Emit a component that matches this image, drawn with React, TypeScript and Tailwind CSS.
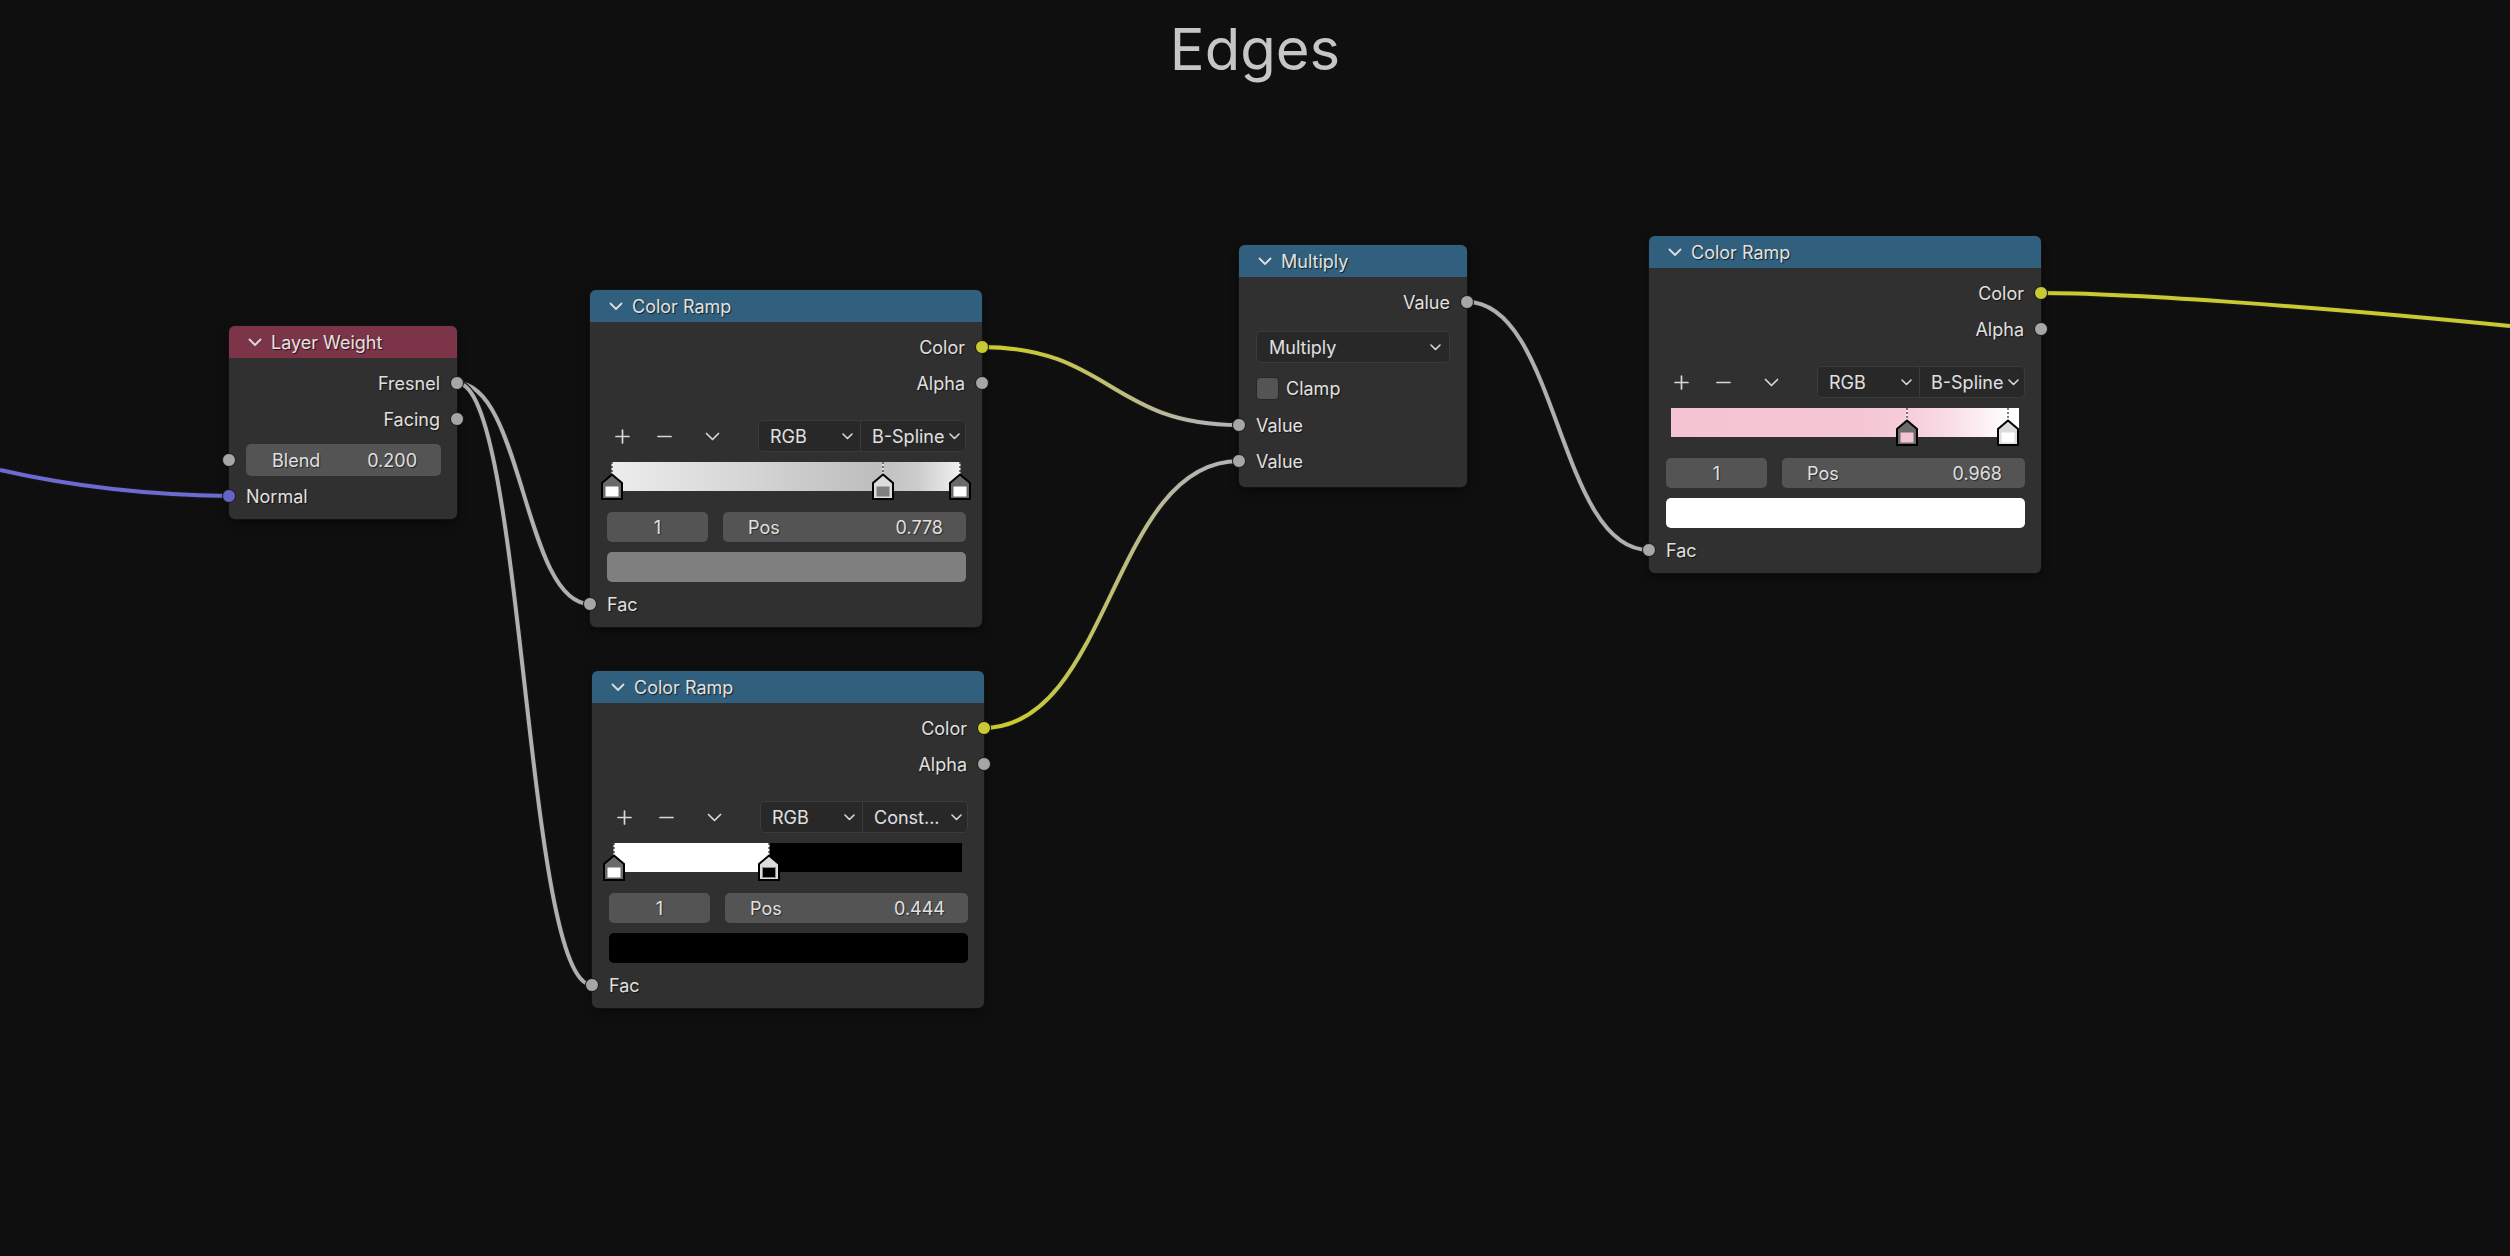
import React from 'react';

const YELLOW = '#c9c934';

function HeadChevron() {
  return (
    <svg width="14" height="9" viewBox="0 0 14 9" className="shrink-0">
      <polyline points="1.5,1.5 7,7 12.5,1.5" fill="none" stroke="#dcdcdc" strokeWidth="1.8" strokeLinecap="round" strokeLinejoin="round" />
    </svg>
  );
}

function SmallChevron() {
  return (
    <svg width="11" height="7" viewBox="0 0 11 7" className="shrink-0">
      <polyline points="1,1 5.5,5.5 10,1" fill="none" stroke="#d8d8d8" strokeWidth="1.6" strokeLinecap="round" strokeLinejoin="round" />
    </svg>
  );
}

function Socket({ side, color }: { side: 'left' | 'right'; color: string }) {
  return (
    <span
      className={`absolute top-1/2 -translate-y-1/2 w-[14px] h-[14px] rounded-full border border-[#161616] ${
        side === 'left' ? '-left-[7px]' : '-right-[7px]'
      } ${color}`}
    />
  );
}

function Node({ pos, width, head, title, children }: { pos: string; width: string; head: string; title: string; children: React.ReactNode }) {
  return (
    <div className={`absolute ${pos} ${width} rounded-[6px] bg-[#303030] shadow-[0_0_0_1px_#121212,0_3px_10px_rgba(0,0,0,0.55)]`}>
      <div className={`h-[32px] rounded-t-[6px] ${head} flex items-center pl-[19px] gap-[9px]`}>
        <HeadChevron />
        <span className="text-[18px] text-[#e2e2e2] [text-shadow:1px_1px_1px_rgba(0,0,0,0.7)]">{title}</span>
      </div>
      {children}
    </div>
  );
}

function Row({ children, className = '' }: { children: React.ReactNode; className?: string }) {
  return <div className={`relative h-[36px] flex items-center px-[17px] text-[18px] text-[#e0e0e0] [text-shadow:1px_1px_1px_rgba(0,0,0,0.6)] ${className}`}>{children}</div>;
}

function Handle({ at, fill, top, active }: { at: number; fill: string; top: string; active?: boolean }) {
  return (
    <div className="absolute top-0 -translate-x-1/2 w-[22px] h-[38px]" style={{ left: `${at * 100}%` }}>
      <svg width="22" height="38" viewBox="0 0 22 38" className="overflow-visible">
        <line x1="11" y1="0" x2="11" y2="12" stroke="#ffffff" strokeWidth="1" />
        <line x1="11" y1="0" x2="11" y2="12" stroke="#000000" strokeWidth="1" strokeDasharray="2 2" />
        <polygon points="11,12.5 21,21 21,37 1,37 1,21" fill={top} stroke="#000" strokeWidth="2" strokeLinejoin="miter" />
        <rect x="4.5" y="24.5" width="13" height="10" fill={fill} stroke={active && fill === '#000000' ? '#8a8a8a' : 'none'} strokeWidth="1" />
      </svg>
    </div>
  );
}

function Ramp({ pos, interp, bar, handles, pos2, swatch }: { pos: string; interp: string; bar: string; handles: React.ReactNode; pos2: string; swatch: string }) {
  return (
    <Node pos={pos} width="w-[392px]" head="bg-[#31607f]" title="Color Ramp">
      <div className="pt-[7px]" />
      <Row className="justify-end">
        <span>Color</span>
        <Socket side="right" color="bg-[#c9c934]" />
      </Row>
      <Row className="justify-end">
        <span>Alpha</span>
        <Socket side="right" color="bg-[#a6a6a6]" />
      </Row>
      <div className="mt-[19px] h-[32px] flex items-center pl-[17px] pr-[16px] text-[18px] text-[#e0e0e0]">
        <div className="w-[30px] flex justify-center">
          <svg width="15" height="15" viewBox="0 0 15 15">
            <path d="M7.5 1v13M1 7.5h13" stroke="#d8d8d8" strokeWidth="1.7" strokeLinecap="round" />
          </svg>
        </div>
        <div className="w-[30px] ml-[12px] flex justify-center">
          <svg width="15" height="15" viewBox="0 0 15 15">
            <path d="M1 7.5h13" stroke="#d8d8d8" strokeWidth="1.7" strokeLinecap="round" />
          </svg>
        </div>
        <div className="w-[30px] ml-[18px] flex justify-center">
          <svg width="15" height="9" viewBox="0 0 15 9">
            <polyline points="1.5,1.5 7.5,7.5 13.5,1.5" fill="none" stroke="#d8d8d8" strokeWidth="1.7" strokeLinecap="round" strokeLinejoin="round" />
          </svg>
        </div>
        <div className="ml-auto w-[208px] h-full flex rounded-[5px] bg-[#282828] border border-[#3b3b3b]">
          <div className="w-[102px] flex items-center justify-between pl-[11px] pr-[7px] border-r border-[#3b3b3b]">
            <span>RGB</span>
            <SmallChevron />
          </div>
          <div className="flex-1 flex items-center justify-between pl-[11px] pr-[5px] whitespace-nowrap">
            <span>{interp}</span>
            <SmallChevron />
          </div>
        </div>
      </div>
      <div className="mt-[10px] ml-[22px] mr-[22px] h-[29px] relative">
        <div className={`absolute inset-0 ${bar}`} />
        {handles}
      </div>
      <div className="mt-[21px] h-[30px] flex gap-[15px] pl-[17px] pr-[16px] text-[18px] text-[#e0e0e0] [text-shadow:1px_1px_1px_rgba(0,0,0,0.5)]">
        <div className="w-[101px] rounded-[5px] bg-[#545454] flex items-center justify-center">1</div>
        <div className="flex-1 rounded-[5px] bg-[#545454] flex items-center justify-between pl-[25px] pr-[23px]">
          <span>Pos</span>
          <span>{pos2}</span>
        </div>
      </div>
      <div className="mt-[10px] h-[30px] pl-[17px] pr-[16px]">
        <div className={`h-full rounded-[5px] ${swatch}`} />
      </div>
      <div className="mt-[4px]" />
      <Row>
        <Socket side="left" color="bg-[#a6a6a6]" />
        <span>Fac</span>
      </Row>
      <div className="pb-[5px]" />
    </Node>
  );
}

function Wires() {
  return (
    <svg width="2510" height="1256" className="absolute inset-0">
      <defs>
        <linearGradient id="g1" gradientUnits="userSpaceOnUse" x1="981" y1="0" x2="1239" y2="0">
          <stop offset="0.15" stopColor={YELLOW} />
          <stop offset="0.85" stopColor="#b4b4b4" />
        </linearGradient>
        <linearGradient id="g2" gradientUnits="userSpaceOnUse" x1="983" y1="0" x2="1239" y2="0">
          <stop offset="0.15" stopColor={YELLOW} />
          <stop offset="0.85" stopColor="#b4b4b4" />
        </linearGradient>
      </defs>
      {[
        { d: 'M 0 470 C 70 486, 140 495, 229 496', c: '#6b6bd2' },
        { d: 'M 457 383 C 523 383, 524 604, 590 604', c: '#b0b0b0' },
        { d: 'M 457 383 C 524 383, 525 985, 592 985', c: '#b0b0b0' },
        { d: 'M 981 347 C 1110 347, 1110 425, 1239 425', c: 'url(#g1)' },
        { d: 'M 983 728 C 1111 728, 1111 461, 1239 461', c: 'url(#g2)' },
        { d: 'M 1467 302 C 1558 302, 1558 550, 1649 550', c: '#b0b0b0' },
        { d: 'M 2041 293 C 2120 293, 2300 305, 2510 326', c: YELLOW },
      ].map((w, i) => (
        <g key={i}>
          <path d={w.d} fill="none" stroke="#151515" strokeWidth="6.5" />
          <path d={w.d} fill="none" stroke={w.c} strokeWidth="4" />
        </g>
      ))}
    </svg>
  );
}

export default function App() {
  return (
    <div className="relative w-[2510px] h-[1256px] overflow-hidden bg-[#0f0f0f] font-['Inter',sans-serif]">
      <div className="relative pt-[20px] text-center text-[58px] leading-none text-[#c6c6c6]">Edges</div>

      <Wires />

      {/* Layer Weight */}
      <Node pos="left-[229px] top-[326px]" width="w-[228px]" head="bg-[#7c3449]" title="Layer Weight">
        <div className="pt-[7px]" />
        <Row className="justify-end">
          <span>Fresnel</span>
          <Socket side="right" color="bg-[#a6a6a6]" />
        </Row>
        <Row className="justify-end">
          <span>Facing</span>
          <Socket side="right" color="bg-[#a6a6a6]" />
        </Row>
        <Row className="mt-[5px] pr-[16px]">
          <Socket side="left" color="bg-[#a6a6a6]" />
          <div className="w-full h-[32px] rounded-[5px] bg-[#545454] flex items-center justify-between pl-[26px] pr-[24px]">
            <span>Blend</span>
            <span>0.200</span>
          </div>
        </Row>
        <Row>
          <Socket side="left" color="bg-[#6363c9]" />
          <span>Normal</span>
        </Row>
        <div className="pb-[5px]" />
      </Node>

      {/* Color Ramp 1 */}
      <Ramp
        pos="left-[590px] top-[290px]"
        interp="B-Spline"
        bar="bg-[linear-gradient(to_right,#ececec_0%,#d8d8d8_35%,#c6c6c6_62%,#bebebe_76%,#cdcdcd_88%,#f0f0f0_100%)]"
        pos2="0.778"
        swatch="bg-[#7f7f7f]"
        handles={
          <>
            <Handle at={0} fill="#ffffff" top="#6a6a6a" />
            <Handle at={0.778} fill="#7f7f7f" top="#dcdcdc" active />
            <Handle at={1} fill="#ffffff" top="#6a6a6a" />
          </>
        }
      />

      {/* Color Ramp 2 */}
      <Ramp
        pos="left-[592px] top-[671px]"
        interp="Const..."
        bar="bg-[linear-gradient(to_right,#ffffff_0%,#ffffff_44.4%,#000000_44.4%,#000000_100%)]"
        pos2="0.444"
        swatch="bg-[#000000]"
        handles={
          <>
            <Handle at={0} fill="#ffffff" top="#6a6a6a" />
            <Handle at={0.444} fill="#000000" top="#dcdcdc" active />
          </>
        }
      />

      {/* Multiply */}
      <Node pos="left-[1239px] top-[245px]" width="w-[228px]" head="bg-[#31607f]" title="Multiply">
        <div className="pt-[7px]" />
        <Row className="justify-end">
          <span>Value</span>
          <Socket side="right" color="bg-[#a6a6a6]" />
        </Row>
        <div className="mt-[11px] h-[32px] px-[17px] text-[18px] text-[#e0e0e0]">
          <div className="h-full rounded-[5px] bg-[#282828] border border-[#3b3b3b] flex items-center justify-between pl-[12px] pr-[8px]">
            <span>Multiply</span>
            <SmallChevron />
          </div>
        </div>
        <div className="mt-[13px] h-[24px] flex items-center gap-[7px] px-[17px] text-[18px] text-[#e0e0e0] [text-shadow:1px_1px_1px_rgba(0,0,0,0.6)]">
          <div className="w-[23px] h-[23px] rounded-[4px] bg-[#545454] border border-[#262626]" />
          <span>Clamp</span>
        </div>
        <div className="mt-[7px]" />
        <Row>
          <Socket side="left" color="bg-[#a6a6a6]" />
          <span>Value</span>
        </Row>
        <Row>
          <Socket side="left" color="bg-[#a6a6a6]" />
          <span>Value</span>
        </Row>
        <div className="pb-[8px]" />
      </Node>

      {/* Color Ramp 3 */}
      <Ramp
        pos="left-[1649px] top-[236px]"
        interp="B-Spline"
        bar="bg-[linear-gradient(to_right,#f5c4d3_0%,#f5c6d4_55%,#f6cdd9_68%,#f9dde6_80%,#fdf2f5_91%,#ffffff_97%,#ffffff_100%)]"
        pos2="0.968"
        swatch="bg-[#ffffff]"
        handles={
          <>
            <Handle at={0.677} fill="#f5c4d3" top="#6a6a6a" />
            <Handle at={0.968} fill="#ffffff" top="#dcdcdc" active />
          </>
        }
      />
    </div>
  );
}
